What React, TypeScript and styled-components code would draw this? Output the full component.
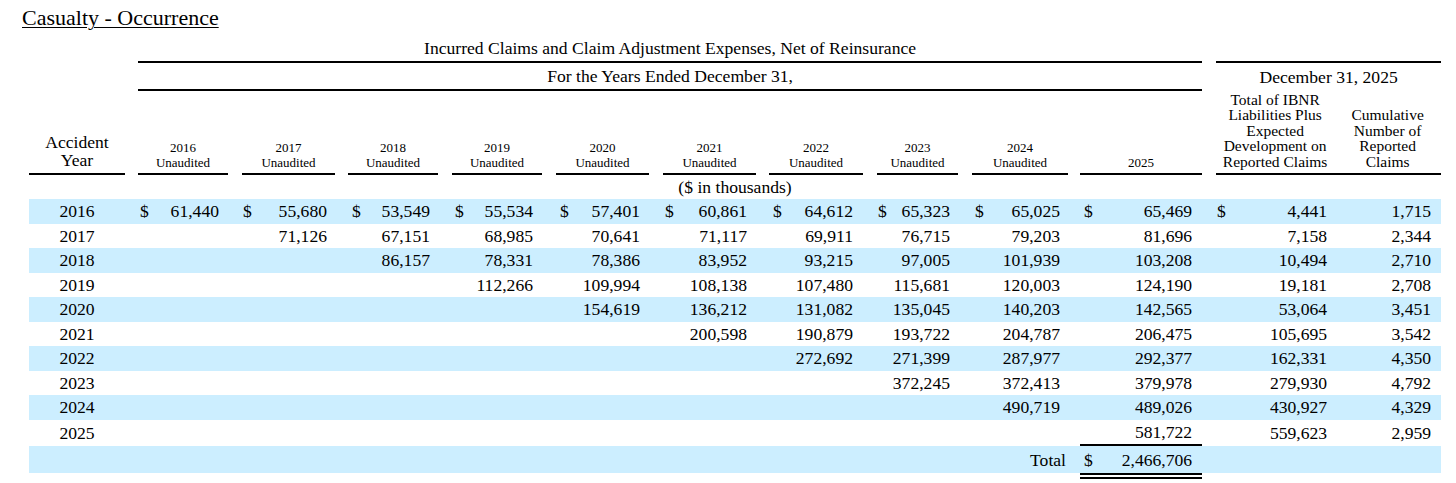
import * as React from 'react';
import styled, { createGlobalStyle } from 'styled-components';

const GlobalStyle = createGlobalStyle`
  html, body {
    margin: 0;
    padding: 0;
    background: #ffffff;
  }
  body {
    font-family: 'Liberation Serif', 'Times New Roman', serif;
    color: #000000;
  }
`;

const SHADE = '#cceeff';

const Page = styled.div`
  padding: 5px 0 0 0;
  width: 1456px;
`;

const Title = styled.div`
  margin: 0 0 7px 22px;
  font-size: 22px;
  line-height: 26px;
  text-decoration: underline;
  text-underline-offset: 2px;
  text-decoration-thickness: 1px;
`;

const Table = styled.table`
  table-layout: fixed;
  width: 1412px;
  margin-left: 29px;
  border-collapse: separate;
  border-spacing: 0;
  font-size: 17.6px;

  td {
    padding: 0;
    white-space: nowrap;
  }
`;

const GroupCell = styled.td<{ $rule?: boolean; $top?: number }>`
  text-align: center;
  line-height: 20px;
  padding: ${(p) => (p.$top ?? 0)}px 0 3px 0 !important;
  border-bottom: ${(p) => (p.$rule ? '2px solid #000' : '0')};
`;

const HeadRow = styled.tr`
  height: 84px;
`;

const ColHead = styled.td<{ $size: number; $lh: number; $pb: number }>`
  vertical-align: bottom;
  text-align: center;
  font-size: ${(p) => p.$size}px;
  line-height: ${(p) => p.$lh}px;
  padding-bottom: ${(p) => p.$pb}px !important;
  border-bottom: 2px solid #000;
  white-space: normal !important;
`;

const UnitCell = styled.td`
  text-align: center;
  line-height: 24px;
  height: 24px;
`;

const BodyRow = styled.tr<{ $shade: boolean }>`
  & > td {
    background: ${(p) => (p.$shade ? SHADE : 'transparent')};
    line-height: 24.5px;
  }
`;

const YearCell = styled.td`
  text-align: center;
`;

const ValueCell = styled.td<{ $pr: number; $rule?: boolean }>`
  text-align: right;
  padding-right: ${(p) => p.$pr}px !important;
  border-bottom: ${(p) => (p.$rule ? '2px solid #000' : '0')};
`;

const Dollar = styled.span<{ $pl: number }>`
  float: left;
  padding-left: ${(p) => p.$pl}px;
`;

const TotalRow = styled.tr`
  & > td {
    background: ${SHADE};
    background-clip: padding-box;
    line-height: 24.5px;
    padding-top: 2px;
    border-bottom: 6px solid transparent;
  }
`;

const TotalLabel = styled.td`
  text-align: right;
  padding-right: 2px !important;
`;

const TotalValue = styled(ValueCell)`
  border-bottom: 6px double #000 !important;
`;

const years = [2016, 2017, 2018, 2019, 2020, 2021, 2022, 2023, 2024, 2025];
const yearWidths = [90, 93, 90, 90, 93, 93, 94, 81, 96, 122];
const gapWidths = [13, 14, 13, 14, 14, 14, 13, 14, 14, 12];
const padRight = [9, 8, 8, 9, 9, 9, 10, 8, 8, 10];
const padLeft = [2, 1, 4, 3, 4, 2, 4, 1, 3, 4];

interface RowData {
  year: number;
  values: number[];
  ibnr: number;
  count: number;
}

const rows: RowData[] = [
  { year: 2016, values: [61440, 55680, 53549, 55534, 57401, 60861, 64612, 65323, 65025, 65469], ibnr: 4441, count: 1715 },
  { year: 2017, values: [71126, 67151, 68985, 70641, 71117, 69911, 76715, 79203, 81696], ibnr: 7158, count: 2344 },
  { year: 2018, values: [86157, 78331, 78386, 83952, 93215, 97005, 101939, 103208], ibnr: 10494, count: 2710 },
  { year: 2019, values: [112266, 109994, 108138, 107480, 115681, 120003, 124190], ibnr: 19181, count: 2708 },
  { year: 2020, values: [154619, 136212, 131082, 135045, 140203, 142565], ibnr: 53064, count: 3451 },
  { year: 2021, values: [200598, 190879, 193722, 204787, 206475], ibnr: 105695, count: 3542 },
  { year: 2022, values: [272692, 271399, 287977, 292377], ibnr: 162331, count: 4350 },
  { year: 2023, values: [372245, 372413, 379978], ibnr: 279930, count: 4792 },
  { year: 2024, values: [490719, 489026], ibnr: 430927, count: 4329 },
  { year: 2025, values: [581722], ibnr: 559623, count: 2959 },
];

const fmt = (n: number) => n.toLocaleString('en-US');

const App: React.FC = () => {
  return (
    <Page>
      <GlobalStyle />
      <Title>Casualty - Occurrence</Title>
      <Table>
        <colgroup>
          <col style={{ width: 96 }} />
          {years.map((y, i) => (
            <React.Fragment key={y}>
              <col style={{ width: gapWidths[i] }} />
              <col style={{ width: yearWidths[i] }} />
            </React.Fragment>
          ))}
          <col style={{ width: 14 }} />
          <col style={{ width: 118 }} />
          <col style={{ width: 107 }} />
        </colgroup>
        <tbody>
          <tr>
            <td />
            <td />
            <GroupCell colSpan={19} $rule>
              Incurred Claims and Claim Adjustment Expenses, Net of Reinsurance
            </GroupCell>
            <td />
            <GroupCell colSpan={2} $rule />
          </tr>
          <tr>
            <td />
            <td />
            <GroupCell colSpan={19} $rule $top={3}>
              For the Years Ended December 31,
            </GroupCell>
            <td />
            <GroupCell colSpan={2} $top={3}>
              December 31, 2025
            </GroupCell>
          </tr>
          <HeadRow>
            <ColHead $size={17.6} $lh={17.5} $pb={4}>
              Accident
              <br />
              Year
            </ColHead>
            {years.map((y) => (
              <React.Fragment key={y}>
                <td />
                <ColHead $size={13} $lh={15} $pb={3}>
                  {y}
                  {y !== 2025 && (
                    <>
                      <br />
                      Unaudited
                    </>
                  )}
                </ColHead>
              </React.Fragment>
            ))}
            <td />
            <ColHead $size={15.5} $lh={15.5} $pb={4}>
              Total of IBNR
              <br />
              Liabilities Plus
              <br />
              Expected
              <br />
              Development on
              <br />
              Reported Claims
            </ColHead>
            <ColHead $size={15.5} $lh={15.5} $pb={4}>
              Cumulative
              <br />
              Number of
              <br />
              Reported
              <br />
              Claims
            </ColHead>
          </HeadRow>
          <tr>
            <UnitCell colSpan={24}>($ in thousands)</UnitCell>
          </tr>
          {rows.map((row, r) => {
            const offset = 10 - row.values.length;
            const first = r === 0;
            return (
              <BodyRow key={row.year} $shade={r % 2 === 0}>
                <YearCell>{row.year}</YearCell>
                {years.map((y, i) => {
                  const v = i >= offset ? row.values[i - offset] : null;
                  return (
                    <React.Fragment key={y}>
                      <td />
                      <ValueCell $pr={padRight[i]} $rule={row.year === 2025 && i === 9}>
                        {first && <Dollar $pl={padLeft[i]}>$</Dollar>}
                        {v !== null ? fmt(v) : ''}
                      </ValueCell>
                    </React.Fragment>
                  );
                })}
                <td />
                <ValueCell $pr={7}>
                  {first && <Dollar $pl={1}>$</Dollar>}
                  {fmt(row.ibnr)}
                </ValueCell>
                <ValueCell $pr={10}>{fmt(row.count)}</ValueCell>
              </BodyRow>
            );
          })}
          <TotalRow>
            <td colSpan={18} />
            <TotalLabel>Total</TotalLabel>
            <td />
            <TotalValue $pr={10}>
              <Dollar $pl={4}>$</Dollar>
              {fmt(2466706)}
            </TotalValue>
            <td />
            <td />
            <td />
          </TotalRow>
        </tbody>
      </Table>
    </Page>
  );
};

export default App;
